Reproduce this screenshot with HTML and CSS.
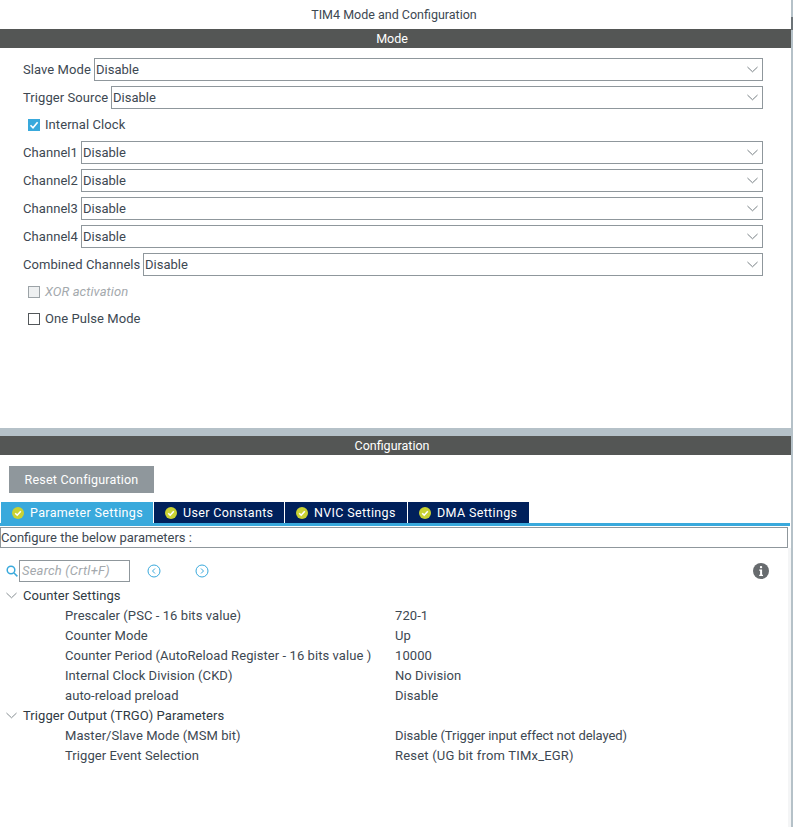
FILE: index.html
```html
<!DOCTYPE html>
<html lang="en">
<head>
<meta charset="utf-8">
<title>TIM4 Mode and Configuration</title>
<link rel="stylesheet" href="styles.css">
</head>
<body>
<div class="page">
  <div class="thumb"></div>
  <h1 class="title">TIM4 Mode and Configuration</h1>
  <section class="mode">
    <h2 class="bar">Mode</h2>
    <div class="mode-form">
      <div class="field"><span class="label w-slave">Slave Mode</span><div class="select"><span>Disable</span><svg class="chev" viewBox="0 0 12 7"><path d="M.5.8 6 6 11.5.8"/></svg></div></div>
      <div class="field"><span class="label w-trigger">Trigger Source</span><div class="select"><span>Disable</span><svg class="chev" viewBox="0 0 12 7"><path d="M.5.8 6 6 11.5.8"/></svg></div></div>
      <div class="check"><span class="box box-on"><svg viewBox="0 0 12 12"><path d="M2.500 6.200 5 8.800 9.600 3.200"/></svg></span><span>Internal Clock</span></div>
      <div class="field"><span class="label w-channel">Channel1</span><div class="select"><span>Disable</span><svg class="chev" viewBox="0 0 12 7"><path d="M.5.8 6 6 11.5.8"/></svg></div></div>
      <div class="field"><span class="label w-channel">Channel2</span><div class="select"><span>Disable</span><svg class="chev" viewBox="0 0 12 7"><path d="M.5.8 6 6 11.5.8"/></svg></div></div>
      <div class="field"><span class="label w-channel">Channel3</span><div class="select"><span>Disable</span><svg class="chev" viewBox="0 0 12 7"><path d="M.5.8 6 6 11.5.8"/></svg></div></div>
      <div class="field"><span class="label w-channel">Channel4</span><div class="select"><span>Disable</span><svg class="chev" viewBox="0 0 12 7"><path d="M.5.8 6 6 11.5.8"/></svg></div></div>
      <div class="field"><span class="label w-combined">Combined Channels</span><div class="select"><span>Disable</span><svg class="chev" viewBox="0 0 12 7"><path d="M.5.8 6 6 11.5.8"/></svg></div></div>
      <div class="check check-off"><span class="box box-off"></span><span>XOR activation</span></div>
      <div class="check"><span class="box"></span><span>One Pulse Mode</span></div>
    </div>
  </section>
  <section class="config">
    <h2 class="bar">Configuration</h2>
    <button class="reset" type="button">Reset Configuration</button>
    <div class="tabs">
      <div class="tab tab-on"><svg class="ok" viewBox="0 0 12 12"><circle cx="6" cy="6" r="6"/><path d="M3.200 6.200 5.200 8.200 8.800 4.200"/></svg>Parameter Settings</div>
      <div class="tab"><svg class="ok" viewBox="0 0 12 12"><circle cx="6" cy="6" r="6"/><path d="M3.200 6.200 5.200 8.200 8.800 4.200"/></svg>User Constants</div>
      <div class="tab"><svg class="ok" viewBox="0 0 12 12"><circle cx="6" cy="6" r="6"/><path d="M3.200 6.200 5.200 8.200 8.800 4.200"/></svg>NVIC Settings</div>
      <div class="tab"><svg class="ok" viewBox="0 0 12 12"><circle cx="6" cy="6" r="6"/><path d="M3.200 6.200 5.200 8.200 8.800 4.200"/></svg>DMA Settings</div>
    </div>
    <div class="hint">Configure the below parameters :</div>
    <div class="lower">
      <div class="tools">
        <svg class="mag" viewBox="0 0 12 12"><circle cx="5" cy="5" r="3.800"/><path d="M8 8 11.400 11.400"/></svg>
        <div class="search">Search (Crtl+F)</div>
        <svg class="nav nav-prev" viewBox="0 0 14 14"><circle cx="7" cy="7" r="6"/><path d="M8 4.500 5.500 7 8 9.500"/></svg>
        <svg class="nav nav-next" viewBox="0 0 14 14"><circle cx="7" cy="7" r="6"/><path d="M6 4.500 8.500 7 6 9.500"/></svg>
        <svg class="info" viewBox="0 0 16 16"><circle cx="8" cy="8" r="8"/><rect x="6.900" y="3" width="2.300" height="2.300" rx="1"/><path d="M6.200 6.500H9.100V11.700H10V13H6.200V11.700H7.100V7.800H6.200Z"/></svg>
      </div>
      <div class="tree">
        <div class="group"><svg class="twist" viewBox="0 0 12 7"><path d="M.5.8 6 6 11.500.8"/></svg>Counter Settings</div>
        <div class="row"><span class="key">Prescaler (PSC - 16 bits value)</span><span>720-1</span></div>
        <div class="row"><span class="key">Counter Mode</span><span>Up</span></div>
        <div class="row"><span class="key">Counter Period (AutoReload Register - 16 bits value )</span><span>10000</span></div>
        <div class="row"><span class="key">Internal Clock Division (CKD)</span><span>No Division</span></div>
        <div class="row"><span class="key">auto-reload preload</span><span>Disable</span></div>
        <div class="group"><svg class="twist" viewBox="0 0 12 7"><path d="M.5.8 6 6 11.500.8"/></svg>Trigger Output (TRGO) Parameters</div>
        <div class="row"><span class="key">Master/Slave Mode (MSM bit)</span><span class="val-tight">Disable (Trigger input effect not delayed)</span></div>
        <div class="row"><span class="key">Trigger Event Selection</span><span class="val-wide">Reset (UG bit from TIMx_EGR)</span></div>
      </div>
    </div>
  </section>
</div>
</body>
</html>
```
FILE: styles.css
```css
* { box-sizing: border-box; }
html, body { margin: 0; padding: 0; background: #fff; }
body { font-family: Roboto, "Liberation Sans", sans-serif; font-size: 13px; color: #3d4852; letter-spacing: .07px; overflow: hidden; }
.page { position: relative; width: 793px; height: 827px; display: flex; flex-direction: column; border-right: 2px solid #b5c1c8; }
.thumb { position: absolute; right: -2px; top: 17px; width: 2px; height: 13px; background: #6b7378; }
.title { margin: 0; height: 29px; flex: none; padding: 7px 3px 0 0; font-size: 12.500px; line-height: 15px; font-weight: 400; letter-spacing: 0; text-align: center; }
.bar { margin: 0; height: 19px; padding-right: 7px; background: #545655; color: #fff; font-size: 12.500px; line-height: 19px; font-weight: 400; letter-spacing: 0; text-align: center; }
.mode { height: 399px; flex: none; }
.mode-form { padding: 10px 28px 0 23px; display: flex; flex-direction: column; }
.field { display: flex; align-items: center; height: 23px; margin-bottom: 5px; }
.label { white-space: nowrap; flex: none; }
.w-slave { width: 71px; }
.w-trigger { width: 88px; }
.w-channel { width: 58px; }
.w-combined { width: 120px; }
.select { flex: 1; height: 23px; border: 1px solid #8f979c; padding: 0 4px 0 1px; display: flex; align-items: center; justify-content: space-between; letter-spacing: 0; }
.chev { width: 11px; height: 7px; fill: none; stroke: #6a7378; stroke-width: 1; }
.check { display: flex; align-items: center; height: 21px; margin: 0 0 6px 5px; gap: 5px; }
.check-off { color: #a4a9ad; font-style: italic; }
.box { width: 12px; height: 12px; margin-top: 1px; border: 1px solid #53575a; background: #fff; display: block; }
.box-off { border-color: #9ca3a7; background: #eef0f1; }
.box-on { border: 0; background: #39a9dc; }
.box-on svg { display: block; width: 12px; height: 12px; fill: none; stroke: #fff; stroke-width: 1.600; }
.config { flex: 1; min-height: 0; border-top: 8px solid #b5c1c8; }
.reset { display: block; margin: 11px 0 9px 9px; width: 145px; height: 27px; padding: 0; border: 0; background: #8f979c; color: #fff; font-family: inherit; font-size: 12.500px; letter-spacing: .2px; }
.tabs { display: flex; height: 24px; margin-right: 1px; padding-left: 1px; border-bottom: 3px solid #39a9dc; }
.tab { height: 21px; display: flex; align-items: center; padding-left: 11px; background: #00205b; color: #fff; border-right: 1px solid #fff; font-size: 12.500px; letter-spacing: .35px; gap: 6px; width: 131px; }
.tab-on { background: #39a9dc; width: 153px; }
.tab:nth-child(3) { width: 123px; }
.tab:last-child { width: 121px; border-right: 0; }
.ok { width: 12px; height: 12px; flex: none; }
.ok circle { fill: #c9d233; }
.ok path { fill: none; stroke: #fff; stroke-width: 1.600; }
.hint { height: 21px; margin: 1px 3px 0 0; border: 1px solid #8f979c; line-height: 19px; letter-spacing: 0; }
.lower { border-right: 3px solid #f4f5f6; padding-top: 12px; height: 279px; }
.tools { display: flex; align-items: center; height: 22px; padding-left: 6px; }
.mag { width: 12px; height: 12px; fill: none; stroke: #39a9dc; stroke-width: 1.500; }
.search { width: 111px; height: 22px; margin-left: 1px; border: 1px solid #8f979c; color: #a4a9ad; font-style: italic; line-height: 20px; padding-left: 2px; letter-spacing: .2px; }
.nav { width: 14px; height: 14px; fill: none; stroke: #39a9dc; stroke-width: 1; }
.nav-prev { margin-left: 17px; }
.nav-next { margin-left: 34px; }
.info { width: 16px; height: 16px; margin-left: auto; margin-right: 19px; fill: #676b6e; }
.info rect, .info path { fill: #fff; }
.tree { margin-top: 4px; display: flex; flex-direction: column; }
.group { height: 20px; line-height: 20px; padding-left: 23px; position: relative; color: #2f3a43; }
.twist { position: absolute; left: 6px; top: 6px; width: 11px; height: 7px; fill: none; stroke: #7b8388; stroke-width: 1; }
.row { height: 20px; line-height: 20px; padding-left: 65px; display: flex; }
.key { width: 330px; white-space: nowrap; }
.val-tight { letter-spacing: -.07px; }
.val-wide { letter-spacing: .2px; }
```
